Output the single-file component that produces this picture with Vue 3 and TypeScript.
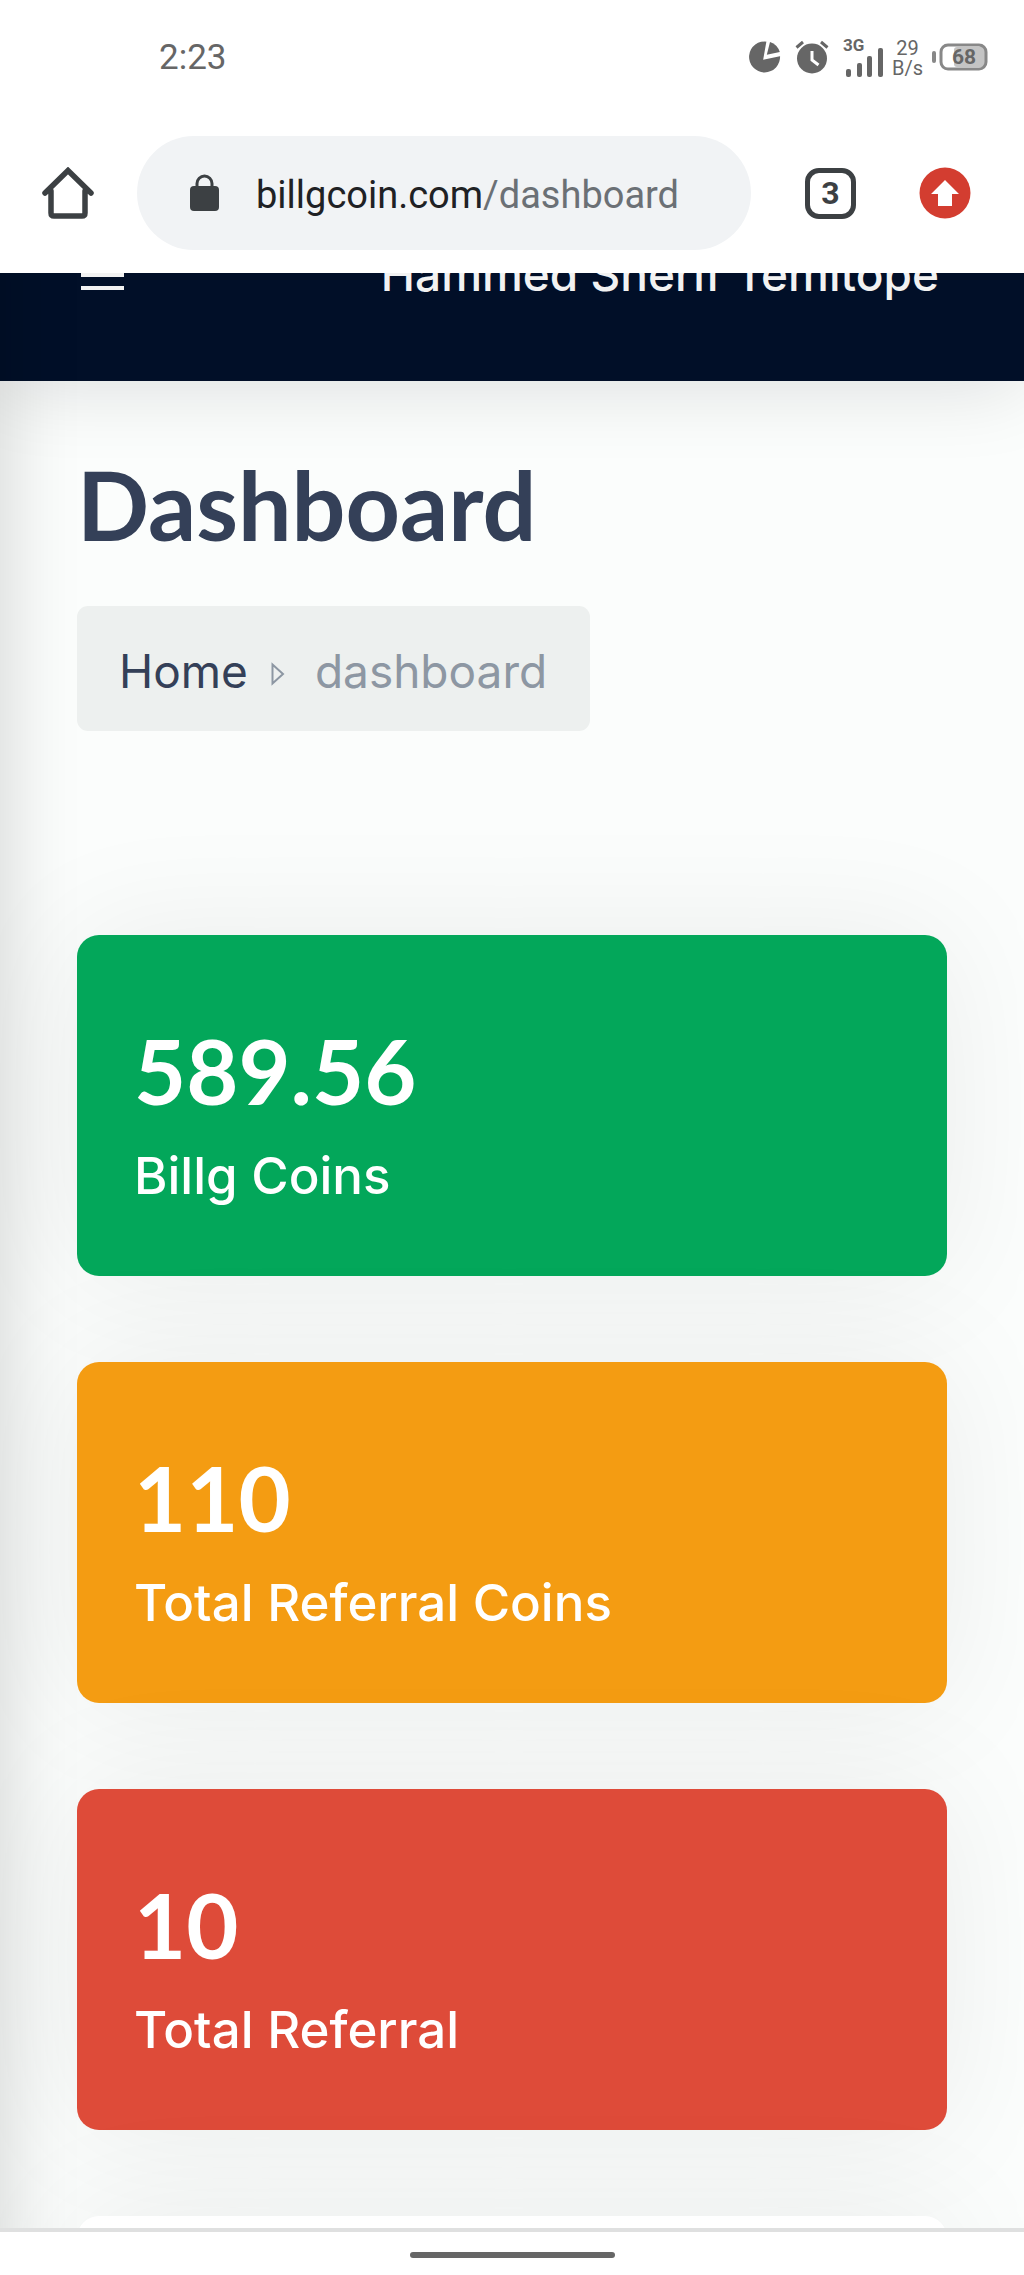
<script setup lang="ts">
interface Stat {
  value: string
  label: string
  tone: 'green' | 'orange' | 'red'
}

const stats: Stat[] = [
  { value: '589.56', label: 'Billg Coins', tone: 'green' },
  { value: '110', label: 'Total Referral Coins', tone: 'orange' },
  { value: '10', label: 'Total Referral', tone: 'red' },
]
</script>

<template>
  <div class="screen">
    <div class="status">
      <time class="clock">2:23</time>
      <div class="indicators">
        <svg width="32" height="32" viewBox="0 0 32 32" aria-hidden="true">
          <path d="M18.500 .7A15.500 15.500 0 1 0 31 14.500L15.400 17.400Z" fill="#666" />
          <path d="M18.500 0L15.400 17.400L32 14" fill="none" stroke="#fff" stroke-width="2" />
          <path d="M21 .9A15.500 15.500 0 0 1 30.800 11L17.800 13.800Z" fill="#666" />
        </svg>
        <svg width="34" height="34" viewBox="0 0 34 34" aria-hidden="true">
          <circle cx="17" cy="18.5" r="15" fill="#666" />
          <path d="M17 11V20L23.5 25" fill="none" stroke="#fff" stroke-width="3" />
          <path d="M1.5 7.5L8 2M32.5 7.5L26 2" fill="none" stroke="#666" stroke-width="3" />
        </svg>
        <svg width="42" height="40" viewBox="0 0 42 40" role="img" aria-label="3G signal">
          <text x="0" y="14" class="network">3G</text>
          <g fill="#666">
            <rect x="3" y="32" width="5" height="8" rx="2" />
            <rect x="14" y="26" width="5" height="14" rx="2" />
            <rect x="24" y="19" width="5" height="21" rx="2" />
            <rect x="35" y="11" width="5" height="29" rx="2" />
          </g>
        </svg>
        <div class="speed"><span>29</span><span>B/s</span></div>
        <svg width="56" height="28" viewBox="0 0 56 28" role="img" aria-label="Battery 68">
          <rect x="0" y="8" width="4" height="12" rx="2" fill="#888" />
          <rect x="22" y="4" width="31" height="20" rx="3" fill="#c4c4c4" />
          <rect x="9" y="2" width="45" height="24" rx="7" fill="none" stroke="#888" stroke-width="3" />
          <text x="32" y="21" text-anchor="middle" class="charge">68</text>
        </svg>
      </div>
    </div>

    <div class="toolbar">
      <button class="icon-button" type="button" aria-label="Home page">
        <svg width="52" height="52" viewBox="0 0 52 52">
          <path d="M9 24V46Q9 49 12 49H40Q43 49 43 46V24M3 26L26 3.5L49 26" fill="none" stroke="#3c4043" stroke-width="5.5" stroke-linecap="round" />
        </svg>
      </button>
      <button class="address" type="button">
        <svg width="30" height="38" viewBox="0 0 30 38" aria-hidden="true">
          <rect x="0" y="12" width="29" height="25" rx="4" fill="#3c4043" />
          <path d="M7 14V9.500a7.500 7.500 0 0 1 15 0V14" fill="none" stroke="#3c4043" stroke-width="3" />
        </svg>
        <span class="url">billgcoin.com<span class="path">/dashboard</span></span>
      </button>
      <button class="tabs" type="button" aria-label="3 open tabs">3</button>
      <button class="icon-button" type="button" aria-label="Update available">
        <svg width="52" height="52" viewBox="0 0 52 52">
          <circle cx="26" cy="26" r="25.500" fill="#d33d30" />
          <path d="M26 13L40 27H33V39H19V27H12Z" fill="#fff" />
        </svg>
      </button>
    </div>

    <div class="page">
      <header class="navbar">
        <button class="burger" type="button" aria-label="Menu">
          <span></span><span></span><span></span>
        </button>
        <a class="user" href="#">Hammed Sherif Temitope</a>
      </header>

      <main class="content">
        <h1>Dashboard</h1>
        <nav class="crumbs" aria-label="Breadcrumb">
          <a href="#">Home</a>
          <svg width="14" height="24" viewBox="0 0 14 24" aria-hidden="true">
            <path d="M1.500 2.500L12 12L1.500 21.500Z" fill="none" stroke="#8d97a3" stroke-width="2" />
          </svg>
          <span>dashboard</span>
        </nav>
        <section class="cards">
          <article v-for="stat in stats" :key="stat.label" class="card" :class="stat.tone">
            <strong>{{ stat.value }}</strong>
            <p>{{ stat.label }}</p>
          </article>
          <article class="card blank"></article>
        </section>
      </main>
    </div>

    <div class="gesture"><span></span></div>
  </div>
</template>

<style>
body {
  margin: 0;
}
</style>

<style scoped>
.screen {
  display: flex;
  flex-direction: column;
  min-height: 100vh;
  background: #fff;
  font-family: Roboto, sans-serif;
}
button {
  margin: 0;
  padding: 0;
  border: 0;
  background: none;
  font: inherit;
  cursor: pointer;
}
svg {
  display: block;
  flex: none;
}
a {
  text-decoration: none;
}
.status {
  display: flex;
  align-items: center;
  justify-content: space-between;
  box-sizing: border-box;
  height: 112px;
  padding: 2px 36px 0 159px;
}
.clock {
  padding-top: 2px;
  color: #666;
  font-size: 35px;
  line-height: 40px;
}
.indicators {
  display: flex;
  align-items: center;
  gap: 14px;
}
.network {
  fill: #666;
  font: 700 17px Roboto, sans-serif;
}
.charge {
  fill: #666;
  font: 700 21px Roboto, sans-serif;
}
.speed {
  display: flex;
  flex-direction: column;
  align-items: center;
  margin: 2px -5px 0 -7px;
  color: #666;
  font-size: 20px;
  line-height: 20px;
}
.toolbar {
  display: flex;
  align-items: center;
  height: 114px;
  padding: 24px 53px 23px 42px;
}
.address {
  display: flex;
  flex: 1;
  align-items: center;
  gap: 36px;
  height: 114px;
  margin: 0 54px 0 43px;
  padding: 0 53px;
  border-radius: 57px;
  background: #f1f3f5;
}
.url {
  padding-top: 4px;
  color: #202124;
  font-size: 38px;
  line-height: 48px;
  white-space: nowrap;
}
.path {
  color: #6b7075;
}
.tabs {
  width: 51px;
  height: 51px;
  margin-right: 63px;
  border: 5px solid #3c4043;
  border-radius: 14px;
  color: #3c4043;
  font-size: 32px;
  font-weight: 700;
  line-height: 40px;
}
.page {
  position: relative;
  display: flex;
  flex: 1;
  flex-direction: column;
  overflow: hidden;
  background: #fbfdfc;
}
/* shadow cast by the off-canvas sidebar */
.page::before {
  content: '';
  position: absolute;
  z-index: 2;
  top: -80px;
  bottom: -80px;
  left: -80px;
  width: 80px;
  box-shadow: 0 0 80px rgba(0, 0, 0, 0.18);
}
.navbar {
  position: relative;
  z-index: 1;
  display: flex;
  align-items: flex-end;
  justify-content: space-between;
  box-sizing: border-box;
  height: 108px;
  padding: 0 85px 77px 81px;
  background: #010f28;
  box-shadow: 0 5px 80px rgba(1, 15, 20, 0.13);
}
.burger {
  display: flex;
  flex-direction: column;
  gap: 9px;
  margin-bottom: 14px;
}
.burger span {
  width: 43px;
  height: 4px;
  background: #f2f2f2;
}
.user {
  color: #f2f2f2;
  font-family: Inter, sans-serif;
  font-size: 46px;
  font-weight: 500;
  line-height: 60px;
  white-space: nowrap;
}
.content {
  display: flex;
  flex: 1;
  flex-direction: column;
  align-items: flex-start;
  padding: 67px 77px 0;
}
h1 {
  margin: 0;
  color: #344058;
  font: 700 95px/112px Lato, sans-serif;
}
.crumbs {
  display: flex;
  align-items: center;
  box-sizing: border-box;
  height: 125px;
  margin-top: 46px;
  padding: 4px 43px 0 42px;
  border-radius: 11px;
  background: #edf0ef;
  color: #8d97a3;
  font-family: Inter, sans-serif;
  font-size: 46px;
  line-height: 60px;
}
.crumbs svg {
  margin: 6px 30px 0 23px;
}
.crumbs a {
  color: #344058;
}
.cards {
  display: flex;
  flex: 1;
  flex-direction: column;
  align-self: stretch;
  gap: 86px;
  margin-top: 204px;
}
.card {
  padding: 79px 57px 62px;
  border-radius: 22px;
  color: #fff;
  box-shadow: 0 0 130px rgba(8, 20, 20, 0.07);
}
.green {
  background: #03a75a;
}
.orange {
  background: #f49c12;
}
.red {
  background: #de4b39;
}
/* the next card continues below the visible part of the page */
.blank {
  flex: 1;
  min-height: 311px;
  margin-bottom: -300px;
  padding: 0;
  background: #fff;
}
.card strong {
  display: block;
  font: 700 90px/112px Lato, sans-serif;
}
.card p {
  margin: 12px 0 0;
  font: 500 51px/76px Inter, sans-serif;
}
.gesture {
  display: flex;
  justify-content: center;
  border-top: 4px solid #dfe0e0;
  padding: 20px 0 17px;
}
.gesture span {
  width: 205px;
  height: 6px;
  border-radius: 3px;
  background: #666;
}
</style>
